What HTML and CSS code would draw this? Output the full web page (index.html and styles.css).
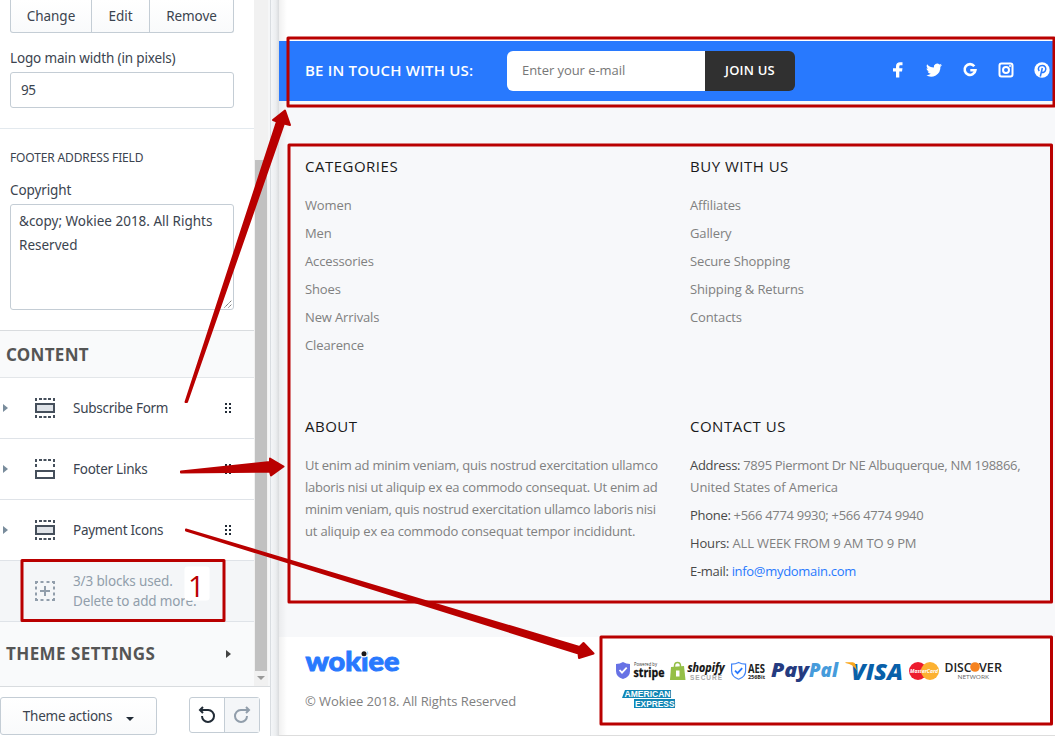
FILE: index.html
```html
<!DOCTYPE html>
<html lang="en">
<head>
<meta charset="utf-8">
<title>Wokiee footer settings</title>
<link rel="stylesheet" href="styles.css">
</head>
<body>
<div class="app">
  <aside class="sidebar">
    <div class="scroll">
      <div class="panel">
        <section class="fields">
          <div class="btn-group"><button>Change</button><button>Edit</button><button>Remove</button></div>
          <label class="label logo-label">Logo main width (in pixels)</label>
          <div class="input">95</div>
        </section>
        <section class="fields address">
          <h3 class="caption">FOOTER ADDRESS FIELD</h3>
          <label class="label copy-label">Copyright</label>
          <div class="textarea">&amp;copy; Wokiee 2018. All Rights<br>Reserved
            <svg class="grip" width="8" height="8" viewBox="0 0 8 8"><path d="M.5 7.5 7.5.5M4.500 7.500l3-3" stroke="#666" fill="none" stroke-dasharray="1.4 .5"/></svg>
          </div>
        </section>
        <h2 class="section-title">CONTENT</h2>
        <div class="block">
          <i class="caret"></i>
          <svg class="block-icon" width="20" height="20" viewBox="0 0 20 20"><path d="M1 3V0M19 3V0M4 1h3M8.500 1h3M13 1h3M0 1h2M18 1h2M1 17v3M19 17v3M4 19h3M8.500 19h3M13 19h3M0 19h2M18 19h2" fill="none" stroke="#454f5b" stroke-width="2"/><path d="M1 6h18v8H1z" fill="#dfe3e8" stroke="#454f5b" stroke-width="2"/></svg>
          <span class="name">Subscribe Form</span>
          <svg class="drag" width="6" height="10"><path d="M0 1h2M4 1h2M0 5h2M4 5h2M0 9h2M4 9h2" stroke="#212b36" stroke-width="2"/></svg>
        </div>
        <div class="block">
          <i class="caret"></i>
          <svg class="block-icon" width="20" height="20" viewBox="0 0 20 20"><path d="M1 3V0M19 3V0M4 1h3M8.500 1h3M13 1h3M0 1h2M18 1h2M1 5v3M19 5v3" fill="none" stroke="#454f5b" stroke-width="2"/><path d="M1 12h18v7H1z" fill="#fff" stroke="#454f5b" stroke-width="2"/></svg>
          <span class="name">Footer Links</span>
          <svg class="drag" width="6" height="10"><path d="M0 1h2M4 1h2M0 5h2M4 5h2M0 9h2M4 9h2" stroke="#212b36" stroke-width="2"/></svg>
        </div>
        <div class="block">
          <i class="caret"></i>
          <svg class="block-icon" width="20" height="20" viewBox="0 0 20 20"><path d="M1 3V0M19 3V0M4 1h3M8.500 1h3M13 1h3M0 1h2M18 1h2M1 17v3M19 17v3M4 19h3M8.500 19h3M13 19h3M0 19h2M18 19h2" fill="none" stroke="#454f5b" stroke-width="2"/><path d="M1 6h18v8H1z" fill="#dfe3e8" stroke="#454f5b" stroke-width="2"/></svg>
          <span class="name">Payment Icons</span>
          <svg class="drag" width="6" height="10"><path d="M0 1h2M4 1h2M0 5h2M4 5h2M0 9h2M4 9h2" stroke="#212b36" stroke-width="2"/></svg>
        </div>
        <div class="block add">
          <svg class="block-icon" width="20" height="20" viewBox="0 0 20 20"><path d="M1 3V1h2M5.500 1h3M11.500 1h3M17 1h2v2M19 5.500v3M19 11.500v3M19 17v2h-2M14.500 19h-3M8.500 19h-3M3 19H1v-2M1 14.500v-3M1 8.500v-3M10 5v10M5 10h10" fill="none" stroke="#919eab" stroke-width="2"/></svg>
          <span class="name">3/3 blocks used.<br>Delete to add more.</span>
        </div>
        <h2 class="section-title theme"><span>THEME SETTINGS</span><i class="caret"></i></h2>
      </div>
      <div class="scrollbar"><div class="thumb"></div><div class="down"></div></div>
    </div>
    <div class="actions">
      <button class="theme-actions">Theme actions<i></i></button>
      <div class="history">
        <span><svg width="18" height="18" viewBox="0 0 18 18"><path d="M5 1 2 4l3 3M2.200 4h8A6 6 0 1 1 4 10" fill="none" stroke="#212b36" stroke-width="2"/></svg></span>
        <span class="off"><svg width="18" height="18" viewBox="0 0 18 18"><path d="m13 1 3 3-3 3M15.800 4h-8A6 6 0 1 0 14 10" fill="none" stroke="#919eab" stroke-width="2"/></svg></span>
      </div>
    </div>
  </aside>
  <div class="gutter"></div>
  <main class="preview">
    <div class="subscribe">
      <h4>BE IN TOUCH WITH US:</h4>
      <div class="form"><div class="email">Enter your e-mail</div><div class="join">JOIN US</div></div>
      <div class="social">
        <svg width="16" height="16" viewBox="0 0 16 16"><path d="M6 15.500V9.400H3V6.300h3V4c0-2.500 1.600-3.800 4-3.800h2.500v3H11C9.600 3.200 9.300 3.700 9.300 4.600v1.700h3.200L12 9.400H9.300v6.100z"/></svg>
        <svg width="16" height="16" viewBox="0 0 16 16"><path d="M16 3.100c-.6.300-1.200.4-1.900.5.700-.4 1.200-1 1.400-1.800-.6.400-1.300.6-2 .8A3.280 3.280 0 0 0 7.900 5.600 9.300 9.300 0 0 1 1.100 2.200c-.9 1.500-.4 3.400 1 4.400-.5 0-1-.2-1.500-.4 0 1.600 1.100 2.900 2.600 3.200-.5.100-1 .1-1.500.1.400 1.300 1.600 2.200 3.100 2.300A6.600 6.600 0 0 1 0 13.100 9.300 9.300 0 0 0 14.400 4.800c.6-.4 1.200-1 1.600-1.700z"/></svg>
        <svg width="16" height="16" viewBox="0 0 16 16"><path d="M12.300 4.200A5.400 5.400 0 1 0 13.400 8.300H8.300" fill="none" stroke="#fff" stroke-width="2.600"/></svg>
        <svg width="16" height="16" viewBox="0 0 16 16"><rect x="1.500" y="1.500" width="13" height="13" rx="2" fill="none" stroke="#fff" stroke-width="2"/><circle cx="8" cy="8" r="3" fill="none" stroke="#fff" stroke-width="2"/><circle cx="12" cy="4" r="1"/></svg>
        <svg width="16" height="16" viewBox="0 0 16 16"><circle cx="8" cy="8" r="7.700"/><path d="M5.200 9C3 6 5.400 3.500 8.200 3.500c2.600 0 4 1.700 3.500 4.200-.5 2.600-3.300 3.500-4.300 1.900M8.300 6 6.300 14.500" fill="none" stroke="#2879fe" stroke-width="1.500"/></svg>
      </div>
    </div>
    <div class="columns">
      <section><h5>CATEGORIES</h5><ul><li>Women</li><li>Men</li><li>Accessories</li><li>Shoes</li><li>New Arrivals</li><li>Clearence</li></ul></section>
      <section><h5>BUY WITH US</h5><ul><li>Affiliates</li><li>Gallery</li><li>Secure Shopping</li><li>Shipping &amp; Returns</li><li>Contacts</li></ul></section>
      <section><h5>ABOUT</h5><p class="about">Ut enim ad minim veniam, quis nostrud exercitation ullamco<br>laboris nisi ut aliquip ex ea commodo consequat. Ut enim ad<br>minim veniam, quis nostrud exercitation ullamco laboris nisi<br><span class="last">ut aliquip ex ea commodo consequat tempor incididunt.</span></p></section>
      <section class="contact"><h5>CONTACT US</h5>
        <p><b>Address:</b> 7895 Piermont Dr NE Albuquerque, NM 198866,<br><span class="country">United States of America</span></p>
        <p><b>Phone:</b> +566 4774 9930; +566 4774 9940</p>
        <p class="hours"><b>Hours:</b> ALL WEEK FROM 9 AM TO 9 PM</p>
        <p><b>E-mail:</b> <a>info@mydomain.com</a></p></section>
    </div>
    <footer class="bottom">
      <div class="brand">
        <svg width="96" height="26" viewBox="0 0 96 26"><text x=".5" y="20.300" textLength="94" lengthAdjust="spacingAndGlyphs" font-family="Lato" font-weight="900" font-size="26" fill="#2879fe" stroke="#2879fe" stroke-width=".9">wokiee</text><circle cx="59" cy="2.800" r="3.700" fill="#fff"/><circle cx="59" cy="2.800" r="2.500" fill="#191919"/></svg>
        <div class="copyright">© Wokiee 2018. All Rights Reserved</div>
      </div>
      <svg class="payments" width="390" height="50" viewBox="0 0 390 50" font-family="Open Sans" font-weight="700">
        <path d="M0 2q4 0 7-2 3 2 7 2v7q0 6-7 8-7-2-7-8z" fill="#6772e5"/><path d="m3.500 8 2.500 2.700 4.700-5" fill="none" stroke="#fff" stroke-width="1.800"/>
        <text x="18" y="4" font-size="4.800" textLength="23" lengthAdjust="spacingAndGlyphs" fill="#333" font-weight="400">Powered by</text>
        <text x="17.500" y="15" font-size="12.500" textLength="31" lengthAdjust="spacingAndGlyphs" fill="#111" stroke="#111" stroke-width=".3">stripe</text>
        <path d="m55 5 13-1 1.500 14H54z" fill="#95bf47"/><path d="M58.500 7V4q0-3.500 3-3.500t3 3.500v3" fill="none" stroke="#95bf47" stroke-width="1.500"/><path d="M60 8.500h3.500v6H60z" fill="#fff"/>
        <text x="71.500" y="10" font-size="12" font-style="italic" textLength="37" lengthAdjust="spacingAndGlyphs" fill="#151515" stroke="#151515" stroke-width=".2">shopify</text>
        <text x="74" y="18" font-size="6.500" font-family="Liberation Sans" textLength="32" fill="#aaa">SECURE</text>
        <path d="M115.600 2.200q4 0 7-1.700 3 1.700 7 1.700v6.500q0 6-7 8.500-7-2.500-7-8.500z" fill="#fff" stroke="#3f83f8" stroke-width="1.200"/><path d="m119 8.700 2.500 2.500 4.700-5" fill="none" stroke="#2879fe" stroke-width="1.800"/>
        <text x="132" y="10.500" font-size="12" textLength="17" lengthAdjust="spacingAndGlyphs" fill="#222">AES</text><text x="132" y="17" font-size="6" textLength="17" lengthAdjust="spacingAndGlyphs" fill="#222">256Bit</text>
        <g font-size="20" font-style="italic" font-weight="800"><text x="155" y="14.500" textLength="38" lengthAdjust="spacingAndGlyphs" fill="#253b80">Pay</text><text x="193" y="14.500" textLength="29" lengthAdjust="spacingAndGlyphs" fill="#469bdb">Pal</text></g>
        <text x="235" y="17.500" font-size="23.500" font-style="italic" font-weight="800" textLength="52" lengthAdjust="spacingAndGlyphs" fill="#0860a9">VISA</text><path d="M229.500.2h7.300q2.300.2 2.800 2.600l1.200 6Q237.500 2 229.500.9z" fill="#faa61a"/>
        <circle cx="302" cy="9" r="9" fill="#ed1c2e"/><circle cx="314" cy="9" r="9" fill="#fcb131"/><text x="294" y="11" font-size="5.800" font-style="italic" textLength="28" lengthAdjust="spacingAndGlyphs" fill="#fff">MasterCard</text>
        <g font-size="12.500" fill="#222" font-weight="600"><text x="328.500" y="9.500" textLength="27" lengthAdjust="spacingAndGlyphs">DISC</text><text x="363" y="9.500" textLength="23" lengthAdjust="spacingAndGlyphs">VER</text></g><circle cx="359" cy="5" r="4.800" fill="#f58220"/>
        <text x="341.500" y="17" font-size="5.500" textLength="31.500" lengthAdjust="spacingAndGlyphs" font-weight="400" fill="#666">NETWORK</text>
        <path d="M9 28h46v8H6zM18 37h41v9H18z" fill="#1286b4"/><g fill="#fff" font-size="9.500" font-family="Liberation Sans" stroke="#1286b4" stroke-width="1.400" paint-order="stroke"><text x="8.500" y="35.300" textLength="46" lengthAdjust="spacingAndGlyphs">AMERICAN</text><text x="19" y="44.800" textLength="39.500" lengthAdjust="spacingAndGlyphs">EXPRESS</text></g>
      </svg>
    </footer>
  </main>
  <svg class="annotations" width="1055" height="736" viewBox="0 0 1055 736">
    <g fill="none" stroke="#b90000" stroke-width="3" stroke-linejoin="round"><rect x="288" y="38" width="766" height="68"/><rect x="289" y="145" width="762.500" height="457"/><rect x="601" y="637" width="450.500" height="87"/><rect x="22" y="560.500" width="202" height="60"/></g>
    <g fill="#b90000" stroke="#b90000" stroke-width="2" stroke-linejoin="round"><path d="M185.500 402 277 121.500 273 120 285 110.500 290 125 284 123.500 187 402z"/><path d="M181 471.500 270 462 270 458.500 283.500 466.500 271 475.500 270 471.500 181 472.500z"/><path d="M186 529.500 579.500 647 583.500 643 593.500 653.500 579 658 578.500 653.500 186 530.500z"/></g>
    <rect x="184.500" y="566.500" width="25" height="34" rx="3" fill="#fff"/>
    <text x="188" y="597" font-family="Open Sans" font-weight="500" font-size="29" fill="#b90000">1</text>
  </svg>
</div>
</body>
</html>
```
FILE: styles.css
```css
* { box-sizing: border-box; }
body { margin: 0; overflow: hidden; font-family: "Open Sans", sans-serif; }
h2, h3, h4, h5, p, ul { margin: 0; padding: 0; list-style: none; }
button { margin: 0; padding: 0; font: inherit; color: inherit; letter-spacing: inherit; }
svg { display: block; flex: none; overflow: visible; }
.app { position: relative; display: flex; width: 1055px; height: 736px; }
.sidebar { width: 270px; display: flex; flex-direction: column; background: #fff; font-family: "Noto Sans", sans-serif; font-size: 13.5px; color: #3b444f; }
.scroll { height: 686px; display: flex; }
.panel { width: 254px; }
.fields { height: 129px; padding: 0 20px 0 10px; border-bottom: 1px solid #e3e9ee; }
.btn-group { display: flex; height: 33px; border: 1px solid #c4cdd5; border-top: 0; border-radius: 0 0 3px 3px; background: linear-gradient(#fff, #f9fafb); letter-spacing: -.05px; }
.btn-group button { border: 0; background: none; flex: 0 0 80px; }
.btn-group button + button { border-left: 1px solid #c4cdd5; flex-basis: 58px; }
.btn-group button:last-child { flex: 1; }
.label { display: block; line-height: 20px; }
.logo-label { margin: 15px 0 4px; letter-spacing: -.15px; }
.input { height: 36px; border: 1px solid #c4cdd5; border-radius: 3px; padding-left: 10px; line-height: 35px; letter-spacing: -.4px; }
.address { height: 202px; border-bottom-color: #d9dcdf; }
.caption { padding-top: 19px; line-height: 20px; font-size: 12px; font-weight: 400; letter-spacing: -.14px; }
.copy-label { margin: 12px 0 4px; letter-spacing: -.1px; }
.textarea { position: relative; height: 106px; padding: 4px 8px; border: 1px solid #c4cdd5; border-radius: 3px; line-height: 24px; white-space: nowrap; }
.grip { position: absolute; right: 1px; bottom: 1px; }
.section-title { height: 47px; padding: 0 6px; background: #f9fafb; border-bottom: 1px solid #e3e6e9; font-size: 17px; font-weight: 700; line-height: 47px; letter-spacing: .3px; color: #555; }
.caret { border: solid transparent; border-width: 4px 0 4px 5px; border-left-color: #798c9c; width: 0; }
.block { display: flex; align-items: center; height: 61px; border-bottom: 1px solid #dfe3e8; padding-left: 3px; }
.block-icon { margin-left: 27px; }
.name { width: 151px; margin-left: 18px; line-height: 20px; letter-spacing: -.26px; }
.drag { margin-left: 1px; }
.block.add { padding-left: 8px; background: #f4f6f8; color: #919eab; }
.add .name { letter-spacing: -.14px; }
.section-title.theme { height: 64px; line-height: 62px; border: 0; display: flex; align-items: center; justify-content: space-between; padding-right: 23px; letter-spacing: .43px; }
.theme .caret { border-left-color: #444; }
.scrollbar { width: 16px; background: #f1f1f1; border-right: 2px solid #f5f6f7; display: flex; flex-direction: column; align-items: center; padding-top: 160px; }
.thumb { height: 511px; width: 12px; background: #c1c1c1; }
.down { margin-top: 5px; border: 4px solid transparent; border-top-color: #999; border-bottom: 0; }
.actions { height: 50px; padding-top: 10px; border-top: 1px solid #d9dcdf; display: flex; }
.theme-actions { width: 157px; height: 38px; border: 1px solid #c4cdd5; border-radius: 3px; background: linear-gradient(#fff, #f9fafb); letter-spacing: -.25px; }
.theme-actions i { display: inline-block; margin-left: 14px; border: 4px solid transparent; border-top-color: #212b36; border-bottom: 0; }
.history { margin-left: 32px; width: 71px; height: 36px; border: 1px solid #c4cdd5; border-radius: 3px; display: flex; }
.history span { flex: 1; display: flex; align-items: center; justify-content: center; }
.history .off { background: #f4f6f8; border-left: 1px solid #c4cdd5; }
.gutter { width: 9px; border-left: 1px solid #d9dde1; background: linear-gradient(90deg, #f4f6f8, #eceef0 60%, #d9dbdd); }
.preview { width: 776px; height: 736px; padding-top: 41px; border-bottom: 1px solid #ddd; color: #808080; font-size: 13px; background: linear-gradient(90deg, rgba(0,0,0,.06), transparent 8px) #fff; }
.subscribe { height: 60px; padding: 0 5px 0 26px; background: #2879fe; display: flex; align-items: center; color: #fff; }
.subscribe h4 { width: 202px; padding-bottom: 3px; font-size: 15px; font-weight: 600; letter-spacing: .2px; white-space: nowrap; }
.form { display: flex; width: 288px; height: 40px; border-radius: 6px; overflow: hidden; line-height: 39px; }
.email { width: 198px; background: #fff; color: #777; padding-left: 15px; letter-spacing: -.06px; }
.join { flex: 1; background: #303030; text-align: center; font-weight: 600; letter-spacing: .2px; }
.social { display: flex; gap: 20px; margin: 0 0 2px 95px; fill: #fff; }
.columns { height: 536px; padding: 53px 0 0 26px; background: linear-gradient(90deg, rgba(0,0,0,.05), transparent 8px) #f7f8fa; display: grid; grid-template: 260px 222px / 385px 365px; white-space: nowrap; }
h5 { font-size: 15px; font-weight: 400; line-height: 24px; letter-spacing: .5px; color: #191919; margin-bottom: 13px; }
li { line-height: 28px; letter-spacing: -.13px; }
.about { line-height: 22px; padding-top: 3px; letter-spacing: -.23px; }
.last { letter-spacing: -.18px; }
.contact p { line-height: 22px; margin-bottom: 6px; letter-spacing: -.3px; }
.contact .country { letter-spacing: -.07px; }
.contact .hours { letter-spacing: -.16px; }
.contact h5 { margin-bottom: 16px; }
.contact b { font-weight: 400; color: #484848; }
.contact a { color: #2879fe; }
.bottom { display: flex; padding: 14px 0 0 26px; }
.brand { width: 311px; }
.copyright { margin-top: 13px; line-height: 22px; letter-spacing: -.06px; }
.payments { margin-top: 11px; }
.annotations { position: absolute; inset: 0; pointer-events: none; }
```
